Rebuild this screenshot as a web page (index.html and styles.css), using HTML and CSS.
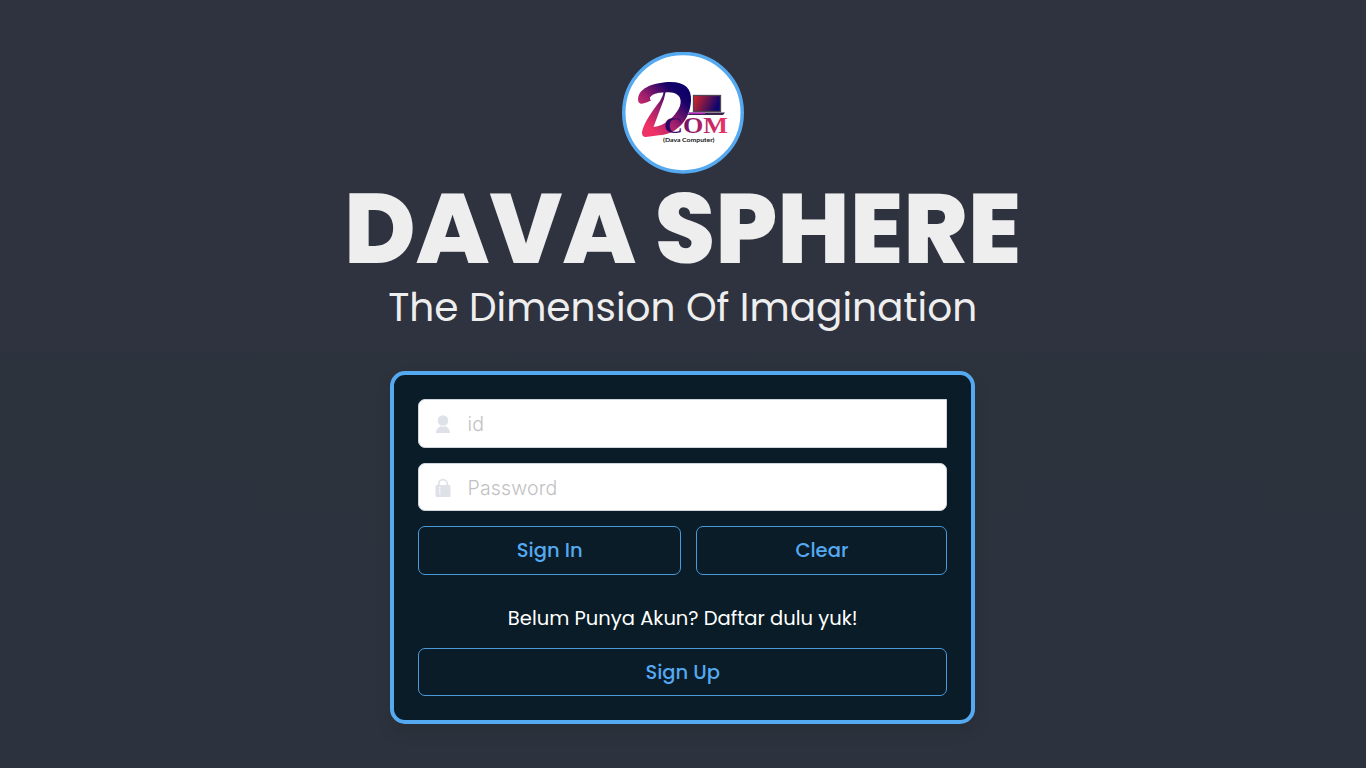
FILE: index.html
```html
<!DOCTYPE html>
<html lang="id">
<head>
<meta charset="utf-8">
<title>Dava Sphere</title>
<link rel="stylesheet" href="styles.css">
</head>
<body>
<main class="page">
  <svg class="logo" viewBox="0 0 122 122" role="img" aria-label="Dcom">
    <defs>
      <linearGradient id="mark" gradientUnits="userSpaceOnUse" x1="62" y1="40" x2="28" y2="76">
        <stop offset="0" stop-color="#0d0068"/><stop offset=".15" stop-color="#1a0268"/><stop offset=".6" stop-color="#a01f6c"/><stop offset="1" stop-color="#ee3266"/>
      </linearGradient>
      <linearGradient id="word" gradientUnits="userSpaceOnUse" x1="42" y1="0" x2="106" y2="0">
        <stop offset="0" stop-color="#180068"/><stop offset=".55" stop-color="#a81f68"/><stop offset="1" stop-color="#f03567"/>
      </linearGradient>
      <linearGradient id="screen" x1="0" y1="0" x2="1" y2=".25">
        <stop offset="0" stop-color="#d92627"/><stop offset="1" stop-color="#0b0570"/>
      </linearGradient>
    </defs>
    <circle cx="61" cy="60.700" r="59.25" fill="#fff" stroke="#55a9f0" stroke-width="3.5"/>
    <path fill-rule="evenodd" d="M16.500 50C14 39 26 32 43 30.300C61 28.500 70 35 69 49C68 67 56 82 37 83.300L24 85Q19.500 85 20 80C22 70 31 58 38 49Q41 44 41.500 40.500C34 40.500 25 44 29 48.500C25 50 19 54 16.500 50ZM43.500 40.500L42 47L31.500 75C43 74 54 64 58 54C61 44 54 39.500 43.500 40.500Z" fill="url(#mark)"/>
    <rect x="71.500" y="43.500" width="27" height="16" fill="url(#screen)" stroke="#514451" stroke-width="1.300"/>
    <path d="M67 60.500H103L101 63H66Z" fill="#3b244b"/>
    <path d="M67 61.200H83" stroke="#d528dd" stroke-width="1.200"/>
    <text x="42" y="80.800" class="logo-word" textLength="64" lengthAdjust="spacingAndGlyphs" fill="url(#word)">COM</text>
    <text x="41" y="89.800" class="logo-caption" textLength="51.500" lengthAdjust="spacingAndGlyphs">(Dava Computer)</text>
  </svg>
  <h1 class="title">DAVA SPHERE</h1>
  <p class="tagline">The Dimension Of Imagination</p>
  <form class="card">
    <label class="field field-id">
      <svg class="icon" viewBox="0 0 16 20"><circle cx="8" cy="6.500" r="5.300"/><path d="M1 19c0-4 3-6 4.500-7 1.500 1 3.500 1 5 0 1.500 1 4.500 3 4.500 7z"/></svg>
      <input class="input" type="text" placeholder="id">
    </label>
    <label class="field">
      <svg class="icon" viewBox="0 0 16 20"><path d="M3.700 8V6a4.300 4.300 0 0 1 8.600 0v2" class="shackle"/><rect x=".5" y="7" width="15" height="12" rx="1"/><path d="M4.800 9v8" class="dots"/></svg>
      <input class="input" type="password" placeholder="Password">
    </label>
    <div class="actions">
      <button class="btn" type="button">Sign In</button>
      <button class="btn" type="button">Clear</button>
    </div>
    <p class="hint">Belum Punya Akun? Daftar dulu yuk!</p>
    <button class="btn" type="button">Sign Up</button>
  </form>
</main>
</body>
</html>
```
FILE: styles.css
```css
* { box-sizing: border-box; }
body {
  margin: 0;
  height: 768px;
  overflow: hidden;
  background: linear-gradient(#2f333f 0, #2f333f 340px, #2c333d 360px, #2d333e 100%);
  font-family: Poppins, Inter, sans-serif;
  color: #eee;
}
.page {
  display: flex;
  flex-direction: column;
  align-items: center;
  width: 1365.400px;
  padding-top: 51.500px;
}
.logo { width: 122px; height: 122px; display: block; }
.logo-word { font: bold 23px "Liberation Serif", serif; }
.logo-caption { font: bold 6.200px Lato, sans-serif; fill: #151515; }
.title {
  margin: 0;
  height: 113px;
  padding-top: 3px;
  font-size: 97.600px;
  font-weight: 800;
  line-height: 104px;
  white-space: nowrap;
}
.tagline {
  margin: 0;
  height: 84.900px;
  padding-top: 1.500px;
  font-size: 39.040px;
  line-height: 40px;
  white-space: nowrap;
}
.card {
  width: 585.400px;
  height: 353px;
  padding: 24px;
  border: 4px solid #55a9f0;
  border-radius: 15px;
  background: #091c28;
  box-shadow: 0 8px 16px rgba(0, 0, 0, .12);
  display: flex;
  flex-direction: column;
  gap: 15px;
}
.field {
  flex: 0 0 48.500px;
  display: flex;
  align-items: center;
  gap: 17px;
  padding: 1px 0 0 15.500px;
  background: #fff;
  border: 1px solid #ced4da;
  border-radius: 7px;
}
.field-id { border-radius: 7px 0 0 7px; }
.icon { width: 16px; height: 20px; fill: #dee2e8; }
.shackle { fill: none; stroke: #dee2e8; stroke-width: 1.800; }
.dots { stroke: #fff; stroke-width: 1.200; stroke-dasharray: 1.600 1; }
.input {
  flex: 1;
  border: 0;
  padding: 0;
  outline: 0;
  background: transparent;
  font: 300 19.520px Inter, sans-serif;
  letter-spacing: .15px;
}
.input::placeholder { color: #bfc1c5; opacity: 1; }
.actions { display: grid; grid-template-columns: 263.400px 1fr; gap: 15px; }
.btn {
  flex: none;
  height: 48.500px;
  padding: 0;
  border: 1px solid #489adb;
  border-radius: 7px;
  background: transparent;
  color: #55a9f0;
  font: 500 19.520px Poppins, Inter, sans-serif;
}
.hint {
  margin: 13px 0 0;
  height: 30px;
  padding-top: 1px;
  line-height: 30px;
  text-align: center;
  color: #fff;
  font-size: 19.520px;
  white-space: nowrap;
}
```
